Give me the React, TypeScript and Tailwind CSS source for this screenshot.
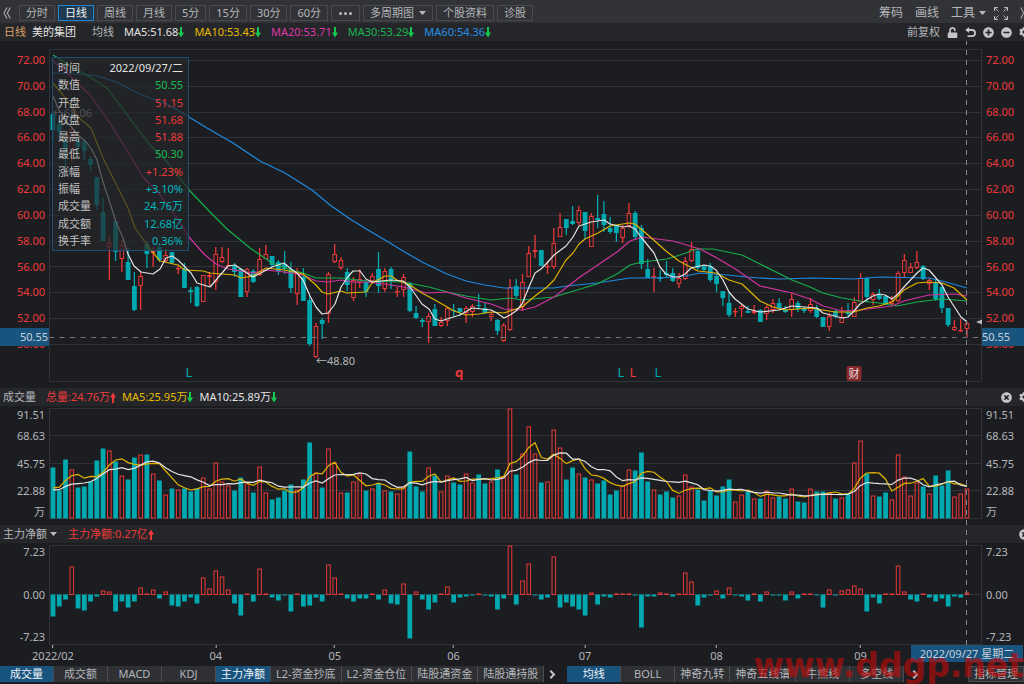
import { useState } from 'react';
import clsx from 'clsx';
import { FaCog, FaUnlock, FaPlusCircle, FaMinusCircle, FaTimesCircle } from 'react-icons/fa';

type Candle = [up: number, high: number, top: number, bottom: number, low: number];
type Point = [number, number];

const FIRST_X = 53;
const STEP = 6.26;
const PLOT_LEFT = 49;
const PLOT_WIDTH = 933;
const RED = '#ea3838';
const TEAL = '#00a8b0';
const GRID = '#303237';

const xAt = (i: number) => FIRST_X + i * STEP;
const leftPct = (x: number) => `${((x - PLOT_LEFT) / PLOT_WIDTH) * 100}%`;

// up flag, high, body top, body bottom, low (in plot units)
const candles: Candle[] = [
  [0, 111, 114, 130, 140], [0, 120, 124, 132, 135], [0, 138, 141, 151, 166], [1, 127, 129, 151, 162],
  [0, 138, 140, 147, 153], [0, 139, 142, 151, 160], [0, 156, 159, 165, 171], [0, 177, 177, 205, 210],
  [0, 198, 212, 241, 241], [1, 236, 243, 247, 280], [0, 220, 221, 252, 261], [1, 240, 245, 259, 272],
  [0, 248, 262, 280, 280], [0, 272, 286, 310, 311], [1, 271, 276, 286, 310], [0, 241, 244, 254, 268],
  [1, 247, 251, 253, 267], [0, 245, 247, 260, 262], [1, 249, 255, 261, 262], [0, 252, 252, 263, 264],
  [1, 266, 268, 269, 274], [0, 263, 269, 288, 288], [0, 287, 290, 292, 303], [0, 286, 287, 306, 307],
  [1, 275, 275, 302, 302], [1, 272, 275, 277, 286], [1, 247, 254, 282, 290], [1, 247, 257, 262, 263],
  [1, 248, 265, 266, 266], [0, 263, 266, 272, 277], [0, 268, 269, 297, 297], [1, 268, 269, 292, 297],
  [0, 269, 271, 282, 283], [1, 248, 259, 275, 276], [1, 245, 254, 259, 259], [0, 256, 256, 265, 267],
  [0, 260, 262, 271, 275], [0, 251, 264, 269, 274], [0, 262, 270, 288, 293], [1, 268, 271, 294, 305],
  [0, 268, 277, 301, 301], [0, 296, 300, 344, 346], [1, 323, 326, 357, 358], [0, 318, 320, 324, 339],
  [1, 272, 274, 314, 323], [1, 244, 254, 262, 263], [1, 257, 260, 268, 270], [0, 268, 272, 285, 291],
  [1, 277, 280, 298, 301], [1, 269, 279, 283, 288], [0, 280, 282, 292, 297], [1, 273, 276, 281, 283],
  [0, 252, 269, 286, 293], [1, 268, 271, 289, 292], [0, 267, 269, 280, 289], [1, 287, 291, 292, 297],
  [1, 274, 277, 290, 297], [0, 282, 283, 311, 312], [0, 306, 313, 318, 319], [0, 318, 320, 322, 327],
  [1, 313, 316, 322, 343], [0, 304, 309, 326, 326], [1, 317, 322, 326, 327], [1, 307, 308, 321, 326],
  [0, 304, 310, 311, 317], [0, 308, 308, 312, 316], [1, 306, 308, 313, 323], [1, 304, 306, 312, 317],
  [0, 294, 305, 306, 309], [0, 303, 308, 313, 314], [1, 313, 314, 317, 321], [0, 319, 320, 331, 335],
  [1, 323, 325, 341, 342], [1, 279, 287, 330, 331], [0, 279, 286, 296, 298], [1, 274, 282, 307, 311],
  [1, 246, 253, 277, 277], [1, 235, 250, 252, 258], [0, 250, 250, 266, 266], [1, 261, 266, 267, 274],
  [1, 228, 243, 267, 269], [1, 213, 227, 237, 237], [0, 219, 219, 228, 235], [0, 206, 221, 224, 225],
  [1, 206, 210, 223, 225], [0, 212, 212, 231, 239], [1, 213, 216, 247, 247], [0, 195, 218, 220, 228],
  [0, 201, 214, 225, 232], [0, 217, 228, 232, 234], [0, 225, 225, 233, 242], [1, 225, 228, 238, 243],
  [1, 203, 213, 226, 228], [0, 211, 213, 237, 240], [0, 225, 228, 264, 269], [0, 259, 269, 278, 278],
  [1, 268, 276, 277, 292], [0, 270, 277, 279, 282], [0, 261, 273, 275, 278], [0, 268, 273, 281, 282],
  [1, 273, 278, 284, 288], [1, 257, 261, 279, 280], [1, 242, 249, 261, 262], [0, 249, 251, 268, 270],
  [0, 265, 266, 270, 271], [0, 263, 266, 280, 282], [0, 274, 276, 284, 292], [0, 291, 291, 298, 306],
  [0, 292, 303, 315, 317], [1, 308, 311, 312, 317], [1, 304, 306, 309, 317], [0, 306, 311, 313, 313],
  [1, 305, 311, 313, 314], [0, 309, 310, 322, 322], [1, 305, 307, 314, 320], [1, 299, 303, 310, 313],
  [0, 298, 303, 308, 310], [0, 306, 310, 312, 313], [1, 293, 299, 310, 317], [0, 301, 303, 309, 312],
  [0, 307, 308, 311, 313], [1, 298, 304, 311, 313], [0, 305, 308, 317, 318], [0, 317, 317, 327, 327],
  [1, 313, 316, 327, 331], [0, 309, 311, 316, 318], [1, 307, 317, 323, 323], [0, 303, 312, 314, 316],
  [1, 297, 302, 317, 317], [1, 273, 278, 302, 302], [0, 278, 278, 297, 302], [1, 292, 294, 300, 305],
  [0, 289, 295, 299, 300], [0, 295, 296, 304, 305], [1, 296, 301, 304, 306], [1, 271, 273, 301, 302],
  [1, 254, 260, 273, 277], [1, 263, 267, 273, 273], [1, 251, 262, 268, 269], [0, 265, 266, 279, 280],
  [1, 278, 280, 284, 290], [0, 280, 282, 299, 301], [0, 286, 287, 308, 313], [0, 308, 308, 325, 327],
  [1, 320, 327, 330, 331], [1, 319, 330, 331, 332], [1, 322, 323, 329, 337],
];

const volumes = [
  51, 28, 59, 49, 31, 32, 37, 58, 70, 68, 57, 43, 39, 61, 64, 64, 45, 38, 24, 30,
  29, 30, 27, 30, 41, 30, 56, 37, 33, 28, 41, 35, 26, 52, 26, 19, 21, 28, 34, 29,
  39, 76, 46, 31, 70, 56, 26, 26, 37, 44, 28, 30, 35, 28, 27, 25, 32, 67, 32, 27,
  51, 43, 27, 43, 36, 34, 45, 36, 44, 35, 37, 49, 42, 110, 44, 65, 92, 65, 36, 37,
  89, 71, 39, 51, 45, 41, 39, 35, 38, 24, 28, 33, 49, 48, 66, 37, 29, 24, 27, 21,
  23, 44, 32, 29, 18, 28, 23, 32, 39, 17, 24, 27, 20, 20, 28, 21, 22, 20, 30, 17,
  16, 30, 27, 27, 26, 20, 21, 25, 56, 78, 45, 23, 22, 26, 19, 64, 42, 23, 36, 32,
  25, 43, 33, 48, 22, 25, 30,
];

// volumes of the sessions before the first visible bar, needed by the averages
const earlierVolumes = [26, 26, 26, 26, 26, 25, 25, 25, 25];

const flows = [
  -22, -12, -5, 28, -14, -16, -7, -2, 4, 3, -17, -7, -13, -7, 7, 1, 5, -4, 3, -11,
  -12, -7, -3, -9, 17, 6, 24, 18, 5, -9, -21, 1, -7, 26, 1, -3, -6, -1, -17, 1,
  -12, -11, -3, -7, 30, 17, 1, -4, -7, -4, -4, 1, -5, 5, -9, -10, 11, -44, 3, -5,
  -15, -8, 1, 8, -8, -3, -2, -1, 1, -1, -2, -15, -4, 49, -10, 14, 31, -1, -5, -3,
  38, -13, -8, -12, -15, -21, 2, -10, -2, -3, 1, 1, 1, -1, -33, -2, -2, 2, 1, -2,
  1, 22, 13, -11, -3, -1, 4, -4, 7, -1, -2, -6, 1, -7, 3, -1, -1, -6, 3, -4,
  1, 1, -1, -13, 5, -1, 4, 5, 9, 6, -17, -3, -9, 1, 1, 29, 3, -5, -7, 1,
  -3, -7, -4, -12, -2, -3, 2,
];

const averages: { name: string; color: string; points: Point[] }[] = [
  {
    name: 'MA60', color: '#1e8ae0',
    points: [[53, 73], [78, 74], [97, 76], [117, 82], [135, 92], [150, 98], [167, 104], [189, 117], [207, 128], [233, 143], [260, 161], [285, 173], [312, 190], [330, 205], [350, 219], [368, 230], [385, 240], [403, 251], [422, 262], [447, 274], [466, 281], [485, 285], [504, 288], [554, 288], [567, 286], [597, 283], [630, 278], [660, 278], [685, 276], [700, 273], [727, 275], [747, 277], [760, 278], [780, 279], [813, 278], [853, 279], [880, 277], [929, 278], [942, 281], [967, 288]],
  },
  {
    name: 'MA30', color: '#17ad4c',
    points: [[53, 55], [72, 67], [90, 77], [107, 88], [120, 105], [137, 128], [150, 145], [167, 162], [189, 190], [210, 212], [227, 229], [250, 248], [272, 263], [291, 270], [303, 273], [316, 278], [341, 278], [366, 281], [403, 282], [429, 287], [447, 292], [466, 296], [491, 300], [510, 298], [522, 300], [554, 297], [567, 293], [597, 284], [617, 274], [630, 265], [642, 262], [667, 259], [680, 255], [697, 249], [713, 249], [742, 255], [760, 264], [792, 280], [810, 287], [823, 293], [842, 298], [860, 301], [879, 303], [897, 306], [917, 302], [942, 299], [967, 301]],
  },
  {
    name: 'MA20', color: '#d0359f',
    points: [[53, 61], [67, 73], [90, 95], [103, 113], [113, 128], [128, 152], [143, 177], [160, 195], [177, 218], [189, 237], [204, 254], [216, 264], [228, 269], [253, 273], [266, 270], [284, 272], [303, 275], [316, 281], [328, 282], [341, 280], [353, 282], [366, 282], [385, 284], [403, 287], [427, 293], [447, 292], [466, 298], [491, 304], [504, 309], [522, 310], [535, 307], [554, 297], [580, 277], [617, 252], [630, 241], [642, 237], [673, 241], [700, 249], [717, 258], [737, 270], [760, 286], [792, 293], [810, 299], [823, 306], [842, 311], [860, 310], [892, 306], [904, 301], [929, 295], [954, 294], [967, 296]],
  },
  {
    name: 'MA10', color: '#e0b400',
    points: [[53, 83], [63, 95], [78, 117], [91, 128], [103, 158], [113, 178], [128, 208], [135, 228], [150, 249], [160, 261], [178, 265], [185, 270], [203, 271], [210, 273], [222, 274], [235, 275], [241, 278], [253, 276], [266, 268], [284, 270], [303, 274], [316, 285], [322, 292], [328, 294], [341, 291], [347, 293], [366, 292], [372, 283], [385, 276], [391, 276], [397, 280], [410, 285], [422, 293], [435, 300], [454, 311], [466, 315], [479, 314], [491, 312], [504, 313], [522, 307], [535, 296], [547, 287], [554, 280], [566, 260], [573, 253], [579, 244], [585, 239], [598, 233], [610, 226], [629, 223], [635, 224], [648, 235], [666, 251], [679, 261], [698, 271], [716, 273], [729, 280], [742, 284], [760, 301], [773, 307], [785, 310], [810, 308], [823, 310], [835, 312], [854, 312], [867, 308], [879, 306], [892, 302], [904, 290], [917, 283], [929, 282], [942, 283], [954, 288], [967, 300]],
  },
  {
    name: 'MA5', color: '#e4e4e4',
    points: [[53, 96], [59, 110], [68, 123], [78, 135], [87, 143], [92, 150], [97, 160], [103, 182], [109, 200], [116, 222], [123, 238], [128, 254], [134, 266], [141, 272], [153, 274], [160, 269], [166, 258], [172, 256], [178, 260], [185, 267], [191, 273], [197, 283], [210, 287], [216, 280], [228, 266], [235, 265], [241, 269], [253, 277], [259, 274], [272, 267], [284, 263], [291, 269], [297, 273], [303, 280], [310, 296], [316, 307], [322, 314], [328, 313], [335, 304], [341, 287], [347, 278], [353, 271], [360, 271], [366, 279], [372, 282], [391, 280], [403, 281], [410, 287], [422, 304], [429, 309], [435, 319], [441, 321], [447, 319], [460, 315], [472, 308], [491, 310], [497, 313], [504, 318], [510, 315], [516, 311], [522, 304], [529, 287], [535, 273], [541, 269], [547, 263], [554, 255], [566, 246], [573, 237], [579, 226], [591, 222], [604, 220], [610, 224], [623, 227], [629, 226], [635, 229], [641, 237], [654, 253], [660, 267], [666, 274], [673, 277], [679, 277], [685, 274], [691, 268], [704, 265], [710, 266], [716, 270], [723, 280], [729, 292], [735, 299], [748, 309], [760, 312], [779, 310], [792, 306], [817, 308], [823, 313], [842, 318], [848, 317], [854, 311], [860, 304], [873, 296], [879, 294], [885, 295], [892, 299], [898, 294], [904, 287], [917, 273], [923, 268], [929, 270], [942, 285], [948, 297], [961, 317], [967, 322]],
  },
];

const periods = ['分时', '日线', '周线', '月线', '5分', '15分', '30分', '60分'];

const legend = [
  { text: 'MA5:51.68', color: 'text-[#e4e4e4]' },
  { text: 'MA10:53.43', color: 'text-[#e8bc00]' },
  { text: 'MA20:53.71', color: 'text-[#dc38a8]' },
  { text: 'MA30:53.29', color: 'text-[#1ab450]' },
  { text: 'MA60:54.36', color: 'text-[#2490e8]' },
];

const quote = [
  { label: '时间', value: '2022/09/27/二', color: 'text-[#e4e4e4]' },
  { label: '数值', value: '50.55', color: 'text-[#19bc54]' },
  { label: '开盘', value: '51.15', color: 'text-[#ee3a3a]' },
  { label: '收盘', value: '51.68', color: 'text-[#ee3a3a]' },
  { label: '最高', value: '51.88', color: 'text-[#ee3a3a]' },
  { label: '最低', value: '50.30', color: 'text-[#19bc54]' },
  { label: '涨幅', value: '+1.23%', color: 'text-[#ee3a3a]' },
  { label: '振幅', value: '+3.10%', color: 'text-[#00b8c0]' },
  { label: '成交量', value: '24.76万', color: 'text-[#00b8c0]' },
  { label: '成交额', value: '12.68亿', color: 'text-[#00b8c0]' },
  { label: '换手率', value: '0.36%', color: 'text-[#00b8c0]' },
];

const prices = ['72.00', '70.00', '68.00', '66.00', '64.00', '62.00', '60.00', '58.00', '56.00', '54.00', '52.00', '50.00'];

const marks = [
  { x: 189, text: 'L', style: 'text-[#00a8b0]' },
  { x: 459, text: 'q', style: 'font-bold text-[#ee3a3a]' },
  { x: 621, text: 'L', style: 'text-[#00a8b0]' },
  { x: 633, text: 'L', style: 'text-[#ee3a3a]' },
  { x: 658, text: 'L', style: 'text-[#00a8b0]' },
];

const months = [
  { i: 0, text: '2022/02' },
  { i: 26, text: '04' },
  { i: 45, text: '05' },
  { i: 64, text: '06' },
  { i: 85, text: '07' },
  { i: 106, text: '08' },
  { i: 129, text: '09' },
];

const indicators = ['成交量', '成交额', 'MACD', 'KDJ', '主力净额', 'L2-资金抄底', 'L2-资金仓位', '陆股通资金', '陆股通持股'];
const overlays = ['均线', 'BOLL', '神奇九转', '神奇五线谱', '牛熊线', '多空线'];

const average = (size: number) => {
  const all = [...earlierVolumes, ...volumes];
  return volumes
    .map((_, i) => {
      const end = i + earlierVolumes.length + 1;
      const sum = all.slice(end - size, end).reduce((a, b) => a + b, 0);
      return `${xAt(i)},${518 - sum / size}`;
    })
    .join(' ');
};

const Arrow = ({ up = false }: { up?: boolean }) => (
  <svg width="6" height="11" viewBox="0 0 6 11" className={clsx('shrink-0', up ? 'rotate-180 text-[#f03a3a]' : 'text-[#14c850]')}>
    <path d="M2 0h2v5.500h2L3 10.500 0 5.500h2z" fill="currentColor" />
  </svg>
);

const Caret = () => (
  <svg width="7" height="4" viewBox="0 0 7 4" className="shrink-0">
    <path d="M0 0h7L3.5 4z" fill="#b9babd" />
  </svg>
);

const Chevrons = ({ flip = false }: { flip?: boolean }) => (
  <svg width="8" height="12" viewBox="0 0 8 12" className={clsx('shrink-0', flip && 'rotate-180')} fill="none" stroke="#a9abaf" strokeWidth="1.1">
    <path d="M4 .5 1 6l3 5.500M7.300.5 4.300 6l3 5.500" />
  </svg>
);

const More = () => (
  <svg width="7" height="9" viewBox="0 0 7 9" fill="none" stroke="#c4c6c9" strokeWidth="2">
    <path d="M1.300.8 5 4.500 1.300 8.200" />
  </svg>
);

const Frame = ({ top, bottom, lines }: { top: number; bottom: number; lines: number[] }) => (
  <g stroke={GRID} fill="none" shapeRendering="crispEdges">
    <rect x="49.5" y={top + 0.5} width="932" height={bottom - top} />
    {lines.map((y) => (
      <line key={y} x1="49" x2="982" y1={y + 0.5} y2={y + 0.5} />
    ))}
  </g>
);

const Bar = ({ i, top, bottom, up }: { i: number; top: number; bottom: number; up: boolean }) =>
  up ? (
    <rect x={xAt(i) - 1.8} y={top + 0.5} width="3.6" height={Math.max(bottom - top - 1, 0.4)} fill="none" stroke={RED} />
  ) : (
    <rect x={xAt(i) - 2.4} y={top} width="4.8" height={Math.max(bottom - top, 1)} fill={TEAL} />
  );

const VolumeAxis = ({ className }: { className: string }) => (
  <div className={clsx('flex shrink-0 flex-col justify-between pt-px pb-[5px]', className)}>
    <span>91.51</span>
    <div className="my-[5px] flex grow flex-col justify-between">
      <span>68.63</span>
      <span>45.75</span>
      <span>22.88</span>
    </div>
    <span>万</span>
  </div>
);

const App = () => {
  const [period, setPeriod] = useState('日线');
  const [indicator, setIndicator] = useState('主力净额');
  const [overlay, setOverlay] = useState('均线');

  const tab = (active: boolean) =>
    clsx(
      'flex h-4 min-w-[54px] shrink-0 items-center justify-center border-r border-[#4a4c51] px-[5px] whitespace-nowrap',
      active ? 'bg-[#19547f] text-[#eef2f5]' : 'bg-[#2e3034] text-[#b4b6ba]'
    );

  return (
    <div className="relative flex h-screen min-h-[600px] flex-col overflow-hidden bg-[#1c1d21] font-['Noto_Sans','Noto_Sans_CJK_SC',sans-serif] text-[11px] leading-4 text-[#b4b6ba]">
      {/* Toolbar */}
      <header className="flex h-[23px] shrink-0 items-center justify-between bg-[#323337] pt-[3px] pl-[3px]">
        <div className="flex items-center gap-[3px]">
          <button aria-label="收起" className="mr-[5px]"><Chevrons /></button>
          {periods.map((name) => (
            <button
              key={name}
              onClick={() => setPeriod(name)}
              className={clsx(
                'flex h-4 items-center border px-1.5 whitespace-nowrap',
                name === period ? 'border-[#1e86d8] bg-[#1f3a50] text-[#f0f0f0]' : 'border-[#494b50]'
              )}
            >
              {name}
            </button>
          ))}
          <button aria-label="更多周期" className="flex h-4 items-center gap-[2px] border border-[#494b50] px-[7px]">
            <span className="size-[3px] rounded-full bg-[#b9babd]" />
            <span className="size-[3px] rounded-full bg-[#b9babd]" />
            <span className="size-[3px] rounded-full bg-[#b9babd]" />
          </button>
          <button className="flex h-4 items-center gap-[5px] border border-[#494b50] px-1.5 whitespace-nowrap">
            多周期图 <Caret />
          </button>
          <button className="flex h-4 items-center border border-[#494b50] px-1.5 whitespace-nowrap">个股资料</button>
          <button className="flex h-4 items-center border border-[#494b50] px-1.5 whitespace-nowrap">诊股</button>
        </div>
        <div className="-mr-1 flex items-center gap-3 text-xs whitespace-nowrap">
          <button>筹码</button>
          <button>画线</button>
          <button className="flex items-center gap-1">工具 <Caret /></button>
          <div className="-ml-1 flex items-center gap-3">
            <button aria-label="全屏">
              <svg width="14" height="13" viewBox="0 0 14 13" fill="none" stroke="#b4b6ba">
                <path d="M.5 4V.5H4M.5.5 4.500 4.500M10 .5h3.500V4M13.500.5 9.500 4.500M.5 9v3.500H4M.5 12.500 4.500 8.500M13.500 9v3.500H10M13.500 12.500 9.500 8.500" />
              </svg>
            </button>
            <button aria-label="展开"><Chevrons flip /></button>
          </div>
        </div>
      </header>

      {/* Moving average legend */}
      <div className="flex h-[18px] shrink-0 items-center justify-between bg-[#25262a] pl-1 whitespace-nowrap">
        <div className="flex items-center gap-2.5">
          <span className="-mr-1 text-[#d9a066]">日线</span>
          <h1 className="mr-1.5 text-[#e4e4e4]">美的集团</h1>
          <span>均线</span>
          {legend.map((item) => (
            <span key={item.text} className={clsx('flex items-center', item.color)}>
              {item.text}
              <Arrow />
            </span>
          ))}
        </div>
        <div className="-mr-[5px] flex items-center gap-[7px] text-[#c4c6c9]">
          <button className="text-[#b4b6ba]">前复权</button>
          <button aria-label="锁定"><FaUnlock size={11} /></button>
          <button aria-label="撤销">
            <svg width="11" height="11" viewBox="0 0 11 11" fill="none" stroke="currentColor" strokeWidth="1.8">
              <path d="M1 3h6a3 3 0 0 1 0 6.200H2.500" />
              <path d="M4.200 0v6L.3 3z" fill="currentColor" stroke="none" />
            </svg>
          </button>
          <button aria-label="放大"><FaPlusCircle size={11} /></button>
          <button aria-label="缩小"><FaMinusCircle size={11} /></button>
          <button aria-label="设置"><FaCog size={10} /></button>
        </div>
      </div>

      <main className="relative flex min-h-0 grow flex-col">
        {/* Price */}
        <section className="relative flex min-h-0 grow-[347] basis-0">
          <div className="flex w-[49px] shrink-0 flex-col justify-between pt-[11px] pr-1 pb-9 text-right text-[#ee3a3a]">
            {prices.map((price) => <span key={price}>{price}</span>)}
          </div>
          <div className="relative min-w-0 grow">
            <svg className="absolute inset-0 size-full" viewBox="49 41 933 347" preserveAspectRatio="none">
              <Frame top={49} bottom={381} lines={prices.map((_, i) => Math.round(60 + i * 25.8))} />
              {candles.map(([up, high, top, bottom, low], i) => (
                <g key={i} stroke={up ? RED : TEAL}>
                  <line x1={xAt(i)} x2={xAt(i)} y1={high} y2={up ? top : low} strokeWidth="1.3" />
                  {up === 1 && <line x1={xAt(i)} x2={xAt(i)} y1={bottom} y2={low} strokeWidth="1.3" />}
                  <g stroke="none">
                    <Bar i={i} top={top} bottom={bottom} up={up === 1} />
                  </g>
                </g>
              ))}
              {averages.map((line) => (
                <polyline key={line.name} points={line.points.join(' ')} fill="none" stroke={line.color} strokeWidth="1.2" strokeLinejoin="round" />
              ))}
              <line x1="49" x2="982" y1="337.5" y2="337.5" stroke="#74767a" strokeDasharray="5 5.5" />
              <path d="M983 319v6l-7-3z" fill="#b9babd" />
            </svg>
            {marks.map((mark) => (
              <span
                key={mark.x}
                className={clsx('absolute bottom-2 -translate-x-1/2 text-[13px]', mark.style)}
                style={{ left: leftPct(mark.x) }}
              >
                {mark.text}
              </span>
            ))}
            <span
              className="absolute bottom-[7px] -translate-x-1/2 rounded-xs bg-[#86292b] px-[2px] leading-[15px] text-[#e8dada]"
              style={{ left: leftPct(854) }}
            >
              财
            </span>
            <span className="absolute bottom-[19px]" style={{ left: leftPct(316) }}>←48.80</span>
            <span className="absolute top-16" style={{ left: leftPct(53) }}>←68.06</span>
            <dl className="absolute top-4 left-[3px] flex h-[194px] w-[137px] flex-col justify-between border border-[#1c4e76] bg-[#24262a]/70 px-[5px] py-px">
              {quote.map((row) => (
                <div key={row.label} className="flex justify-between leading-[17px] whitespace-nowrap">
                  <dt className="text-[#c0c0c0]">{row.label}</dt>
                  <dd className={row.color}>{row.value}</dd>
                </div>
              ))}
            </dl>
          </div>
          <div className="flex w-[42px] shrink-0 flex-col justify-between pt-[11px] pb-9 pl-1 text-[#ee3a3a]">
            {prices.map((price) => <span key={price}>{price}</span>)}
          </div>
          <div className="absolute bottom-[42px] left-0 h-[18px] w-[49px] bg-[#19547f] pr-px text-right leading-[18px] text-[#c6d0d8]">50.55</div>
          <div className="absolute right-0 bottom-[42px] h-[18px] w-[42px] bg-[#19547f] leading-[18px] text-[#c6d0d8]">50.55</div>
        </section>

        {/* Volume */}
        <div className="flex h-[18px] shrink-0 items-center justify-between bg-[#25262a] pl-[3px] whitespace-nowrap">
          <div className="flex items-center">
            <h2 className="mr-[10px]">成交量</h2>
            <span className="mr-1.5 flex items-center text-[#ee3a3a]">总量:24.76万<Arrow up /></span>
            <span className="mr-1.5 flex items-center text-[#e8bc00]">MA5:25.95万<Arrow /></span>
            <span className="flex items-center text-[#e4e4e4]">MA10:25.89万<Arrow /></span>
          </div>
          <div className="-mr-[5px] flex items-center gap-[7px] text-[#c4c6c9]">
            <button aria-label="关闭成交量"><FaTimesCircle size={11} /></button>
            <button aria-label="设置成交量"><FaCog size={10} /></button>
          </div>
        </div>
        <section className="flex min-h-0 grow-[119] basis-0">
          <VolumeAxis className="w-[49px] pr-1 text-right" />
          <div className="relative min-w-0 grow">
            <svg className="absolute inset-0 size-full" viewBox="49 406 933 119" preserveAspectRatio="none">
              <Frame top={408} bottom={518} lines={[435, 463, 490]} />
              {volumes.map((v, i) => (
                <Bar key={i} i={i} top={518.5 - v} bottom={518.5} up={candles[i][0] === 1} />
              ))}
              <polyline points={average(5)} fill="none" stroke="#e0b400" strokeWidth="1.2" />
              <polyline points={average(10)} fill="none" stroke="#e4e4e4" strokeWidth="1.2" />
            </svg>
          </div>
          <VolumeAxis className="w-[42px] pl-1" />
        </section>

        {/* Net inflow */}
        <div className="flex h-[18px] shrink-0 items-center justify-between bg-[#25262a] pl-[3px] whitespace-nowrap">
          <div className="flex items-center gap-[11px]">
            <button className="flex items-center gap-[3px]">主力净额 <Caret /></button>
            <span className="flex items-center text-[#ee3a3a]">主力净额:0.27亿<Arrow up /></span>
          </div>
          <button aria-label="关闭主力净额" className="-mr-[6px] text-[#c4c6c9]"><FaTimesCircle size={11} /></button>
        </div>
        <section className="flex min-h-0 grow-[102] basis-0">
          <div className="flex w-[49px] shrink-0 flex-col justify-between pt-px pr-1 text-right">
            <span>7.23</span><span>0.00</span><span>-7.23</span>
          </div>
          <div className="relative min-w-0 grow">
            <svg className="absolute inset-0 size-full" viewBox="49 543 933 102" preserveAspectRatio="none">
              <Frame top={545} bottom={644} lines={[594]} />
              {flows.map((v, i) => (
                <Bar key={i} i={i} top={v > 0 ? 594.5 - v : 594.5} bottom={v > 0 ? 595 : 594.5 - v} up={v > 0} />
              ))}
            </svg>
          </div>
          <div className="flex w-[42px] shrink-0 flex-col justify-between pt-px pl-1">
            <span>7.23</span><span>0.00</span><span>-7.23</span>
          </div>
        </section>

        {/* Crosshair */}
        <svg className="pointer-events-none absolute top-0 left-[49px] h-[calc(100%-21px)] w-[calc(100%-91px)]" viewBox="49 41 933 604" preserveAspectRatio="none">
          <line x1="966.5" x2="966.5" y1="40" y2="645" stroke="#85878b" strokeDasharray="5 5" />
        </svg>

        <div className="relative mr-[42px] ml-[49px] h-[21px] shrink-0">
          {months.map((month) => (
            <div
              key={month.text}
              className="absolute top-0 flex -translate-x-1/2 flex-col items-center"
              style={{ left: leftPct(xAt(month.i)) }}
            >
              <span className="h-[3px] w-px bg-[#b4b6ba]" />
              <span>{month.text}</span>
            </div>
          ))}
          <div className="absolute top-0 -right-[41px] h-[17px] w-28 bg-[#19547f] text-center leading-[17px] whitespace-nowrap text-[#c6d0d8]">
            2022/09/27 星期二
          </div>
        </div>
      </main>

      {/* Indicator tabs */}
      <footer className="flex h-[18px] shrink-0 items-start justify-between">
        <nav className="flex items-center">
          {indicators.map((name) => (
            <button key={name} onClick={() => setIndicator(name)} className={tab(name === indicator || name === '成交量')}>
              {name}
            </button>
          ))}
          <button aria-label="更多指标" className="mr-[11px] ml-[5px]"><More /></button>
          {overlays.map((name) => (
            <button key={name} onClick={() => setOverlay(name)} className={tab(name === overlay)}>
              {name}
            </button>
          ))}
          <button aria-label="更多均线" className="ml-2"><More /></button>
        </nav>
        <button className="flex h-4 shrink-0 items-center border border-[#4a4c51] bg-[#2e3034] px-[5px] whitespace-nowrap">指标管理</button>
      </footer>

      <div className="pointer-events-none absolute right-0 bottom-0 font-['DejaVu_Sans',sans-serif] text-[33px] leading-9 font-bold text-[#c00a0a]/65">
        www.ddgp.net
      </div>
    </div>
  );
};

export default App;
